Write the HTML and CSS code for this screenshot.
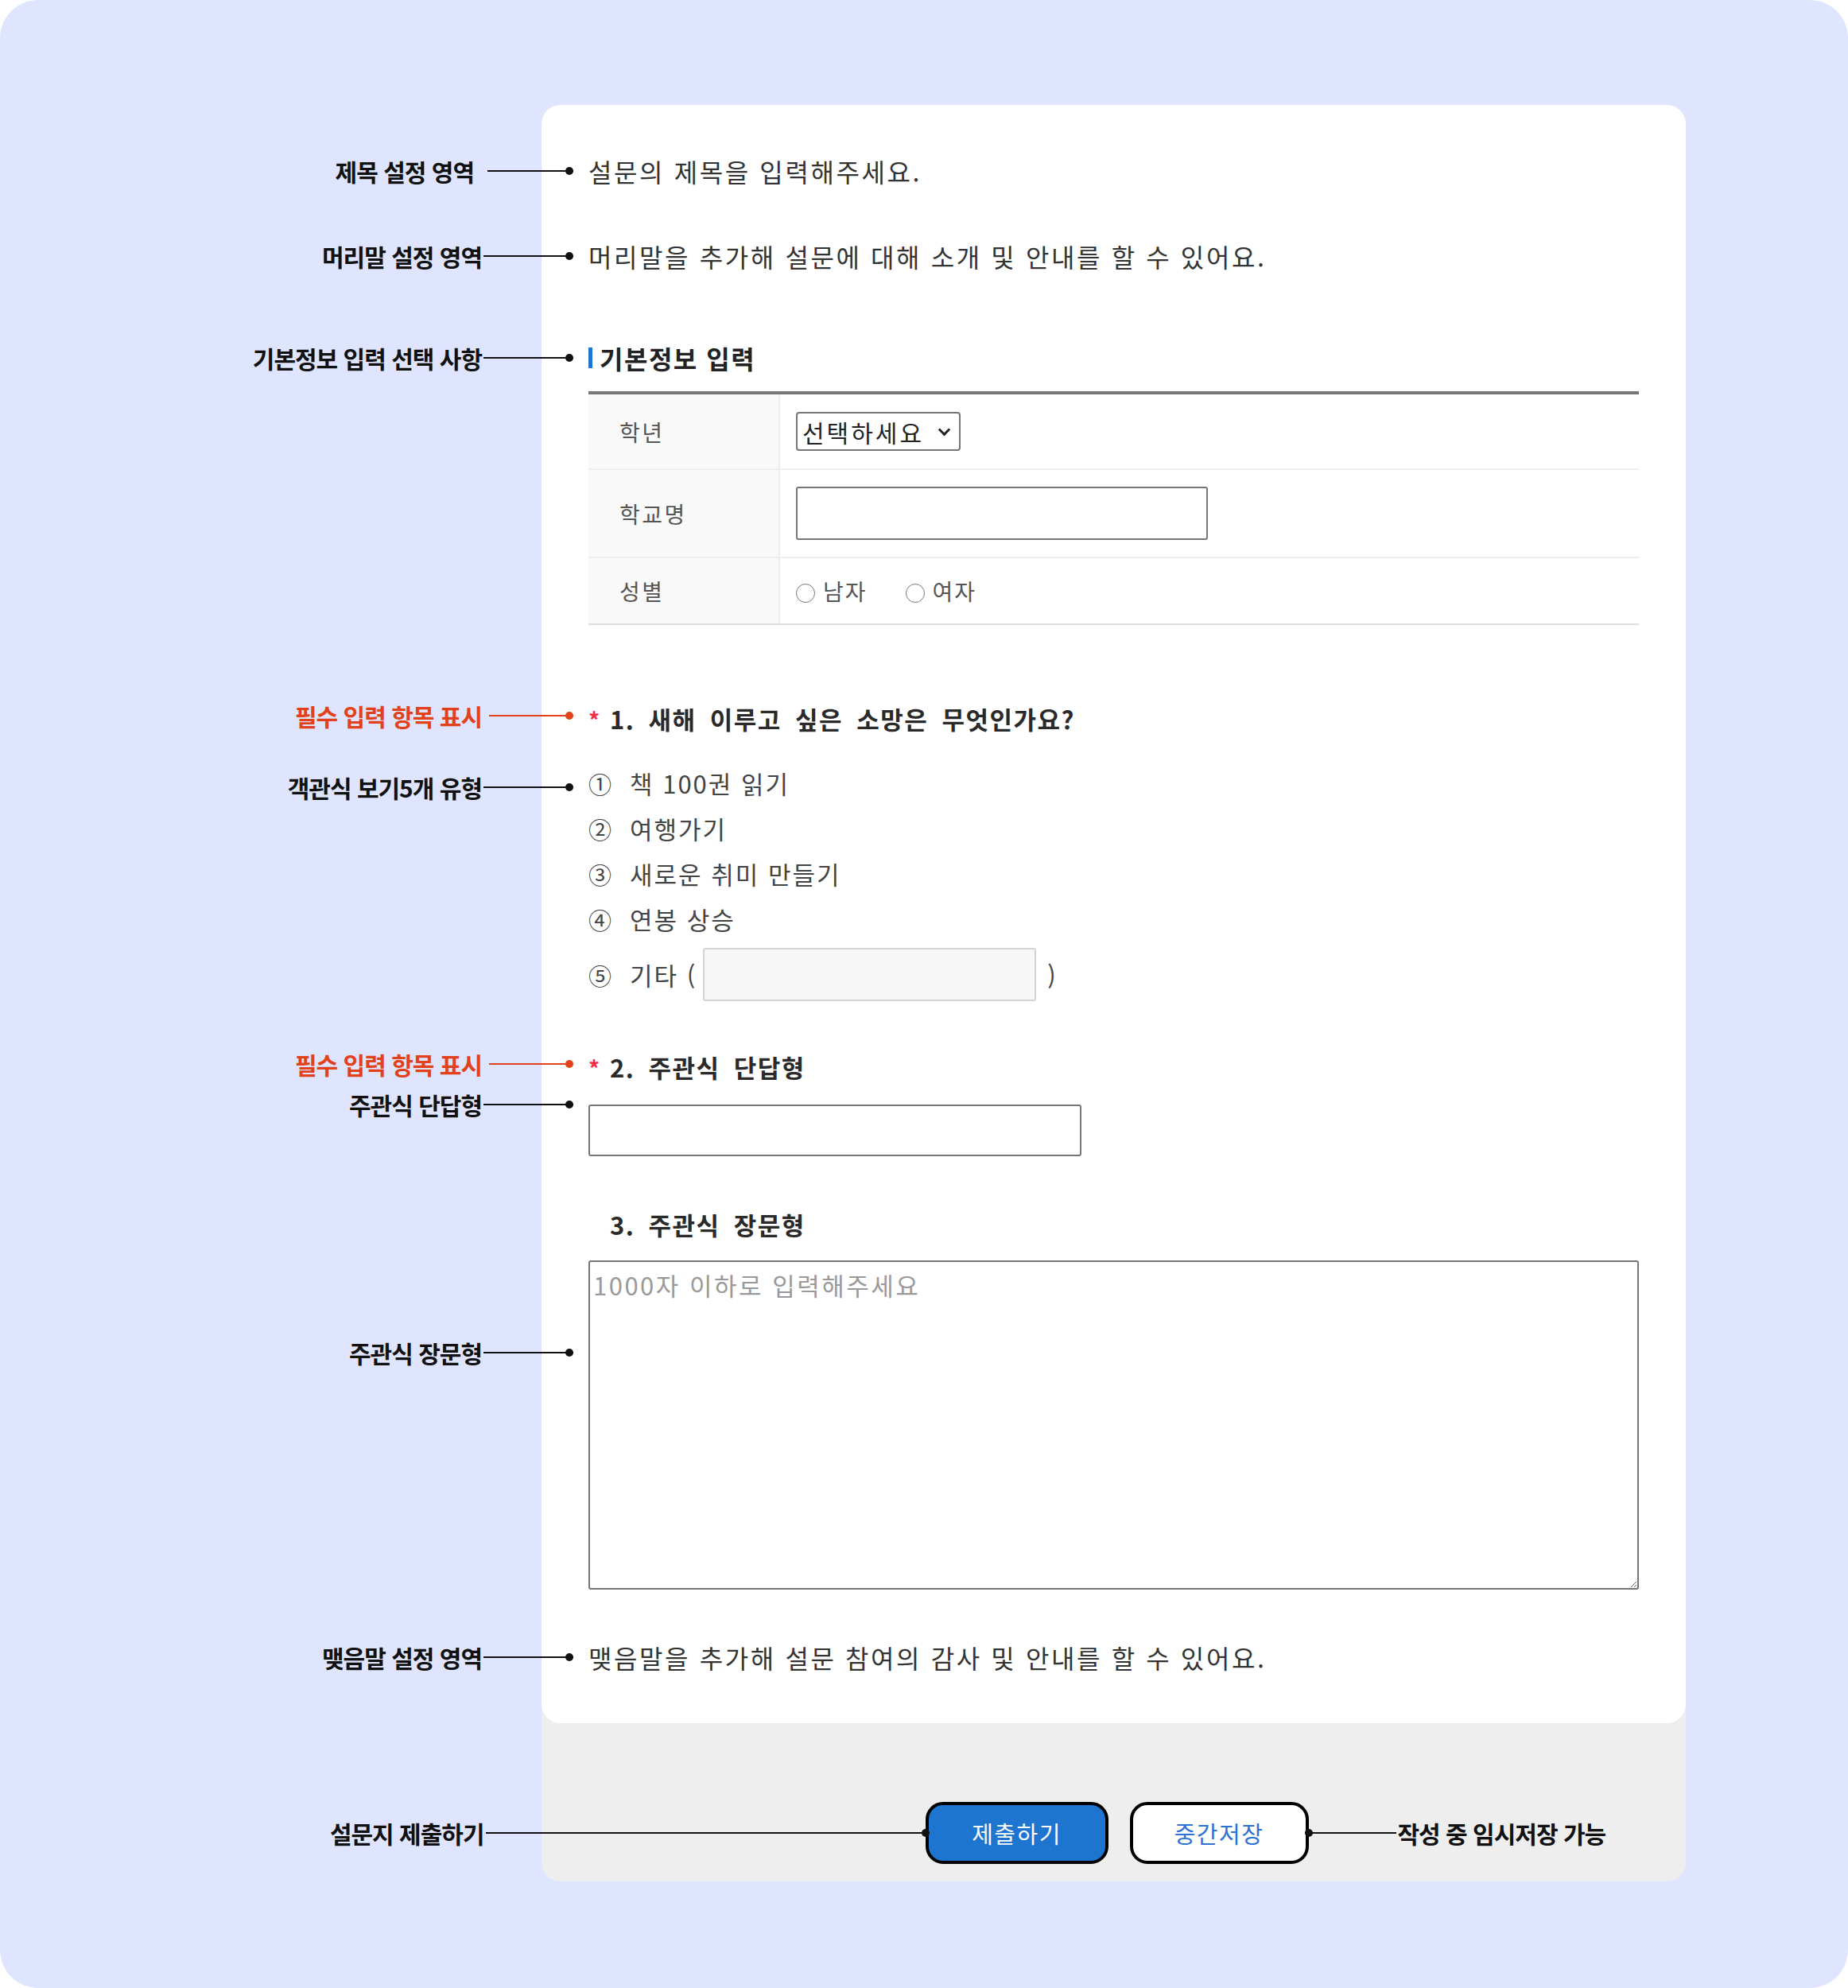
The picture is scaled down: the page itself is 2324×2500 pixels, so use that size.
FILE: index.html
```html
<!DOCTYPE html>
<html lang="ko">
<head>
  <meta charset="UTF-8">
  <title>설문지 화면 구성</title>
  <link rel="stylesheet" href="styles.css">
</head>
<body>

<div class="page">
  <div class="survey">
    <div class="sheet">

      <div class="block">
        <span class="note note-gap"><b class="note-label">제목 설정 영역</b><i class="note-line"></i></span>
        <p class="survey-title">설문의 제목을 입력해주세요.</p>
      </div>

      <div class="block intro">
        <span class="note"><b class="note-label">머리말 설정 영역</b><i class="note-line"></i></span>
        <p>머리말을 추가해 설문에 대해 소개 및 안내를 할 수 있어요.</p>
      </div>

      <div class="block section-head">
        <span class="note"><b class="note-label">기본정보 입력 선택 사항</b><i class="note-line"></i></span>
        <h2>기본정보 입력</h2>
      </div>

      <div class="info-table">
        <div class="info-row row-grade">
          <div class="info-label">학년</div>
          <div class="info-value">
            <span class="select-wrap">
              <select class="grade-select">
                <option>선택하세요</option>
                <option>1학년</option>
                <option>2학년</option>
                <option>3학년</option>
              </select>
            </span>
          </div>
        </div>
        <div class="info-row row-school">
          <div class="info-label">학교명</div>
          <div class="info-value"><input type="text" class="school-input"></div>
        </div>
        <div class="info-row row-gender">
          <div class="info-label">성별</div>
          <div class="info-value">
            <label class="radio"><input type="radio" name="gender">남자</label>
            <label class="radio"><input type="radio" name="gender">여자</label>
          </div>
        </div>
      </div>

      <div class="block question q1">
        <span class="note note-red note-up"><b class="note-label">필수 입력 항목 표시</b><i class="note-line"></i></span>
        <h3><span class="req">*</span>1. 새해 이루고 싶은 소망은 무엇인가요?</h3>
      </div>

      <ol class="choices">
        <li>
          <span class="note note-low"><b class="note-label">객관식 보기5개 유형</b><i class="note-line"></i></span>
          <span class="num">①</span>책 100권 읽기
        </li>
        <li><span class="num">②</span>여행가기</li>
        <li><span class="num">③</span>새로운 취미 만들기</li>
        <li><span class="num">④</span>연봉 상승</li>
        <li class="choice-etc"><span class="num">⑤</span>기타 (<input type="text" class="etc-input">)</li>
      </ol>

      <div class="block question q2">
        <span class="note note-red note-up"><b class="note-label">필수 입력 항목 표시</b><i class="note-line"></i></span>
        <h3><span class="req">*</span>2. 주관식 단답형</h3>
      </div>

      <div class="field short-field">
        <span class="note note-top"><b class="note-label">주관식 단답형</b><i class="note-line"></i></span>
        <input type="text" class="short-input">
      </div>

      <div class="block question q3">
        <h3><span class="req"></span>3. 주관식 장문형</h3>
      </div>

      <div class="field long-field">
        <span class="note note-mid"><b class="note-label">주관식 장문형</b><i class="note-line"></i></span>
        <textarea class="long-input" placeholder="1000자 이하로 입력해주세요"></textarea>
      </div>

      <div class="block outro">
        <span class="note"><b class="note-label">맺음말 설정 영역</b><i class="note-line"></i></span>
        <p>맺음말을 추가해 설문 참여의 감사 및 안내를 할 수 있어요.</p>
      </div>

    </div>

    <div class="actions">
      <button class="btn btn-submit">
        제출하기
        <span class="btn-note btn-note-left"><b class="note-label">설문지 제출하기</b><i class="note-line"></i></span>
      </button>
      <button class="btn btn-save">
        중간저장
        <span class="btn-note btn-note-right"><i class="note-line"></i><b class="note-label">작성 중 임시저장 가능</b></span>
      </button>
    </div>
  </div>
</div>

</body>
</html>
```

FILE: styles.css
```css
:root {
  --lavender: #dfe5fe;
  --text: #333;
  --note: #111;
  --note-red: #e2411c;
  --blue: #1e75d0;
  --field-border: #767676;
}
* {
  margin: 0;
  padding: 0;
  box-sizing: border-box;
}
body {
  background: #fff;
  font-family: "Noto Sans CJK KR", "Noto Sans", sans-serif;
  color: var(--text);
}
.page {
  width: 2324px;
  height: 2500px;
  background: var(--lavender);
  border-radius: 48px;
  padding: 132px 0 0 681px;
}
.survey {
  width: 1439px;
  background: #eee;
  border-radius: 24px;
}
.sheet {
  background: #fff;
  border-radius: 24px;
  padding: 63px 59px 63px 59px;
}

/* text blocks */
.block {
  position: relative;
  font-size: 32px;
  line-height: 40px;
  letter-spacing: 2.6px;
}
.intro { margin-top: 67px; }
.section-head { margin-top: 95px; }
.section-head h2 {
  font-size: 32px;
  font-weight: 700;
  color: #222;
  border-left: 5px solid var(--blue);
  line-height: 26px;
  padding-left: 9px;
  letter-spacing: 1.5px;
}

/* basic info table */
.info-table {
  margin-top: 29px;
  border-top: 4px solid #777;
}
.info-row {
  display: grid;
  grid-template-columns: 241px 1fr;
  border-bottom: 2px solid #eee;
}
.info-row:last-child { border-bottom-color: #ddd; }
.row-grade { height: 95px; }
.row-school { height: 111px; }
.row-gender { height: 84px; }
.info-label {
  background: #f9f9f9;
  border-right: 2px solid #eee;
  display: flex;
  align-items: center;
  padding-left: 39px;
  font-size: 28px;
  color: #555;
  letter-spacing: 2.5px;
}
.info-value {
  display: flex;
  align-items: center;
  padding-left: 20px;
  font-size: 28px;
  color: #555;
  letter-spacing: 2px;
}
.select-wrap {
  position: relative;
  display: inline-block;
}
.select-wrap::after {
  content: "";
  position: absolute;
  right: 15px;
  top: 17px;
  width: 8px;
  height: 8px;
  border-right: 3px solid #222;
  border-bottom: 3px solid #222;
  transform: rotate(45deg);
  pointer-events: none;
}
.grade-select {
  -webkit-appearance: none;
  appearance: none;
  display: block;
  width: 207px;
  height: 49px;
  font-family: inherit;
  font-size: 30px;
  letter-spacing: 3px;
  color: #222;
  border: 2px solid var(--field-border);
  border-radius: 4px;
  background: #fff;
  padding: 0 0 0 6px;
}
.school-input {
  width: 518px;
  height: 67px;
  border: 2px solid var(--field-border);
  border-radius: 3px;
}
.radio {
  display: flex;
  align-items: center;
  margin-right: 48px;
}
.radio input {
  width: 24px;
  height: 24px;
  margin: 6px 10px 0 0;
}

/* questions */
.question h3 {
  font-size: 31px;
  font-weight: 700;
  color: #2a2a2a;
  letter-spacing: 1.5px;
  word-spacing: 7px;
}
.q1 { margin-top: 98px; }
.q2 { margin-top: 63px; }
.q3 { margin-top: 66px; }
.req {
  display: inline-block;
  width: 27px;
  color: #ee2f45;
  font-size: 28px;
  font-weight: 700;
}
.choices {
  list-style: none;
  margin-top: 31px;
  font-size: 31px;
  color: #444;
  letter-spacing: 2px;
}
.choices li {
  position: relative;
  display: flex;
  align-items: center;
  height: 57px;
}
.choices .choice-etc {
  height: 75px;
  padding-top: 8px;
}
.num {
  display: inline-block;
  width: 52px;
  font-size: 29px;
  color: #444;
}
.etc-input {
  width: 419px;
  height: 67px;
  margin: 0 14px 0 8px;
  background: #f7f7f7;
  border: 2px solid #d3d3d3;
  border-radius: 3px;
}

/* open answers */
.field { position: relative; }
.short-field { margin-top: 26px; }
.short-input {
  display: block;
  width: 620px;
  height: 65px;
  border: 2px solid var(--field-border);
  border-radius: 3px;
}
.long-field { margin-top: 25px; }
.long-input {
  display: block;
  width: 1321px;
  height: 414px;
  border: 2px solid var(--field-border);
  border-radius: 3px;
  padding: 6px 4px;
  font-family: inherit;
  font-size: 31px;
  letter-spacing: 2.5px;
  resize: vertical;
}
.long-input::placeholder { color: #999; }
.outro { margin-top: 65px; }

/* footer buttons */
.actions {
  display: flex;
  justify-content: center;
  gap: 27px;
  padding: 99px 0 22px 8px;
}
.btn {
  position: relative;
  height: 78px;
  border: 4px solid #000;
  border-radius: 22px;
  font-family: inherit;
  font-size: 29px;
  letter-spacing: 1.5px;
}
.btn-submit {
  width: 230px;
  background: var(--blue);
  color: #fff;
}
.btn-save {
  width: 225px;
  background: #fff;
  color: #2a72d5;
}

/* annotations */
.note {
  position: absolute;
  right: calc(100% + 19px);
  top: 50%;
  transform: translateY(-50%);
  display: flex;
  align-items: center;
  white-space: nowrap;
  color: var(--note);
}
.note-label {
  font-size: 30px;
  font-weight: 700;
  line-height: 1;
  letter-spacing: -1px;
}
.note-line {
  position: relative;
  display: block;
  width: 113px;
  height: 2px;
  margin-left: 2px;
  background: currentColor;
}
.note-line::after {
  content: "";
  position: absolute;
  right: 0;
  top: -4px;
  width: 10px;
  height: 10px;
  border-radius: 50%;
  background: currentColor;
}
.note-gap .note-line { width: 108px; margin-left: 17px; }
.note-red .note-line { width: 106px; margin-left: 9px; }
.note-red { color: var(--note-red); }
.note-up { top: calc(50% - 5px); }
.note-low { top: calc(50% + 5px); }
.note-top { top: 0; transform: translateY(-50%); }
.note-mid { top: 116px; }

.btn-note {
  position: absolute;
  top: 50%;
  transform: translateY(-50%);
  display: flex;
  align-items: center;
  white-space: nowrap;
  color: var(--note);
}
.btn-note-left { right: calc(100% - 1px); }
.btn-note-left .note-line { width: 558px; }
.btn-note-right { left: calc(100% - 1px); }
.btn-note-right .note-line { width: 115px; margin: 0 2px 0 0; }
.btn-note-right .note-line::after { left: 0; right: auto; }
```
